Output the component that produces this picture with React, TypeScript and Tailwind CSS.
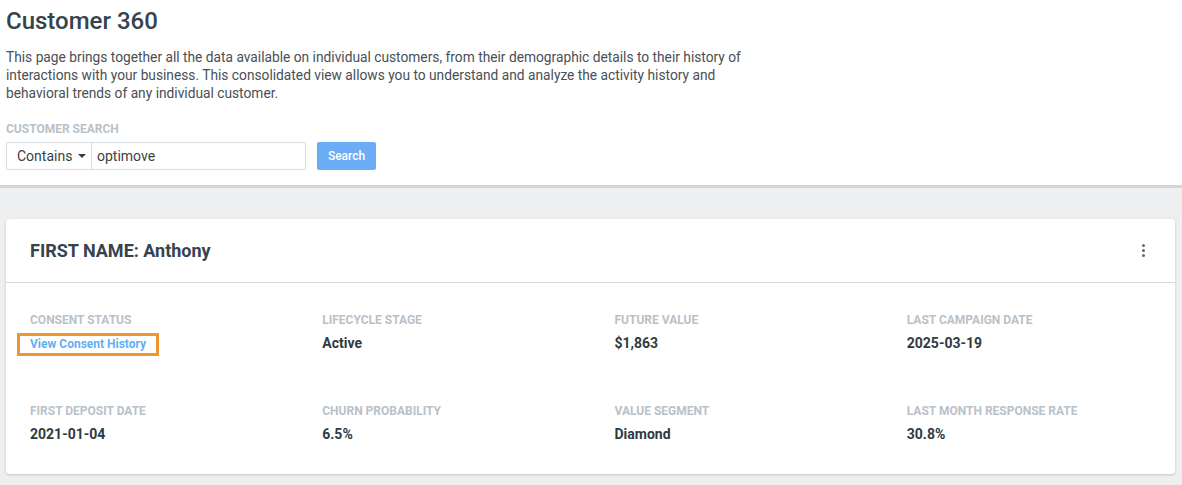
import React from "react";

type Field = { label: string; value: string; link?: boolean };

const fields: Field[] = [
  { label: "CONSENT STATUS", value: "View Consent History", link: true },
  { label: "LIFECYCLE STAGE", value: "Active" },
  { label: "FUTURE VALUE", value: "$1,863" },
  { label: "LAST CAMPAIGN DATE", value: "2025-03-19" },
  { label: "FIRST DEPOSIT DATE", value: "2021-01-04" },
  { label: "CHURN PROBABILITY", value: "6.5%" },
  { label: "VALUE SEGMENT", value: "Diamond" },
  { label: "LAST MONTH RESPONSE RATE", value: "30.8%" },
];

const App = () => {
  return (
    <div className="min-h-[485px] bg-[#eeeff1] font-['Roboto',sans-serif]">
      {/* page header with search */}
      <div className="bg-white px-[6px] pt-[5px] pb-[15px] border-b-[3px] border-[#cfd7db]">
        <h1 className="text-[24px] leading-8 font-medium text-[#36434d]">Customer 360</h1>
        <p className="mt-[11px] max-w-[750px] text-[13.75px] leading-[18px] text-[#4a4f55]">
          This page brings together all the data available on individual customers, from their
          demographic details to their history of interactions with your business. This
          consolidated view allows you to understand and analyze the activity history and
          behavioral trends of any individual customer.
        </p>
        <div className="mt-[19px] text-[12px] leading-4 font-bold text-[#b9c1c8]">CUSTOMER SEARCH</div>
        <div className="mt-[5px] flex items-center">
          <div className="flex h-[28px] border border-[#d8dde1] rounded-[2px]">
            <div className="flex w-[85px] items-center gap-[6px] pl-[10px] border-r border-[#d8dde1] text-[14px] text-[#3a3f44]">
              Contains
              <span className="h-0 w-0 border-x-[4px] border-t-[4px] border-x-transparent border-t-[#3a3f44]" />
            </div>
            <div className="flex w-[213px] items-center pl-[5px] text-[14px] text-[#3a3f44]">optimove</div>
          </div>
          <button className="ml-[11px] h-[28px] w-[59px] rounded-[2px] bg-[#6bacf6] text-[12px] font-medium text-white">
            Search
          </button>
        </div>
      </div>

      {/* customer card */}
      <div className="pt-[31px] pl-[6px] pr-[7px] pb-3">
        <div className="rounded-[4px] bg-white shadow-[0_1px_3px_rgba(0,0,0,0.18)]">
          <div className="flex h-[64px] items-center justify-between px-6 border-b border-[#d5dadd]">
            <div className="text-[18px] font-bold text-[#36434d]">FIRST NAME: Anthony</div>
            <div className="mr-[6px] flex flex-col gap-[2px]">
              <span className="h-[3px] w-[3px] rounded-full bg-[#5b6b78]" />
              <span className="h-[3px] w-[3px] rounded-full bg-[#5b6b78]" />
              <span className="h-[3px] w-[3px] rounded-full bg-[#5b6b78]" />
            </div>
          </div>
          <div className="grid grid-cols-4 gap-y-[49px] pt-[29px] pb-[30px]">
            {fields.map((f) => (
              <div key={f.label} className="pl-6">
                <div className="text-[12px] leading-4 font-bold text-[#b9c1c8]">{f.label}</div>
                <div className="mt-[5px] leading-5">
                  {f.link ? (
                    <span className="relative inline-block text-[12px] font-bold text-[#5fb0f5]">
                      {f.value}
                      <span className="absolute -left-[13px] -right-[13px] top-[-1px] bottom-[-2px] border-[3px] border-[#f0962e]" />
                    </span>
                  ) : (
                    <span className="text-[14px] font-bold text-[#2f3a42]">{f.value}</span>
                  )}
                </div>
              </div>
            ))}
          </div>
        </div>
      </div>
    </div>
  );
};

export default App;
